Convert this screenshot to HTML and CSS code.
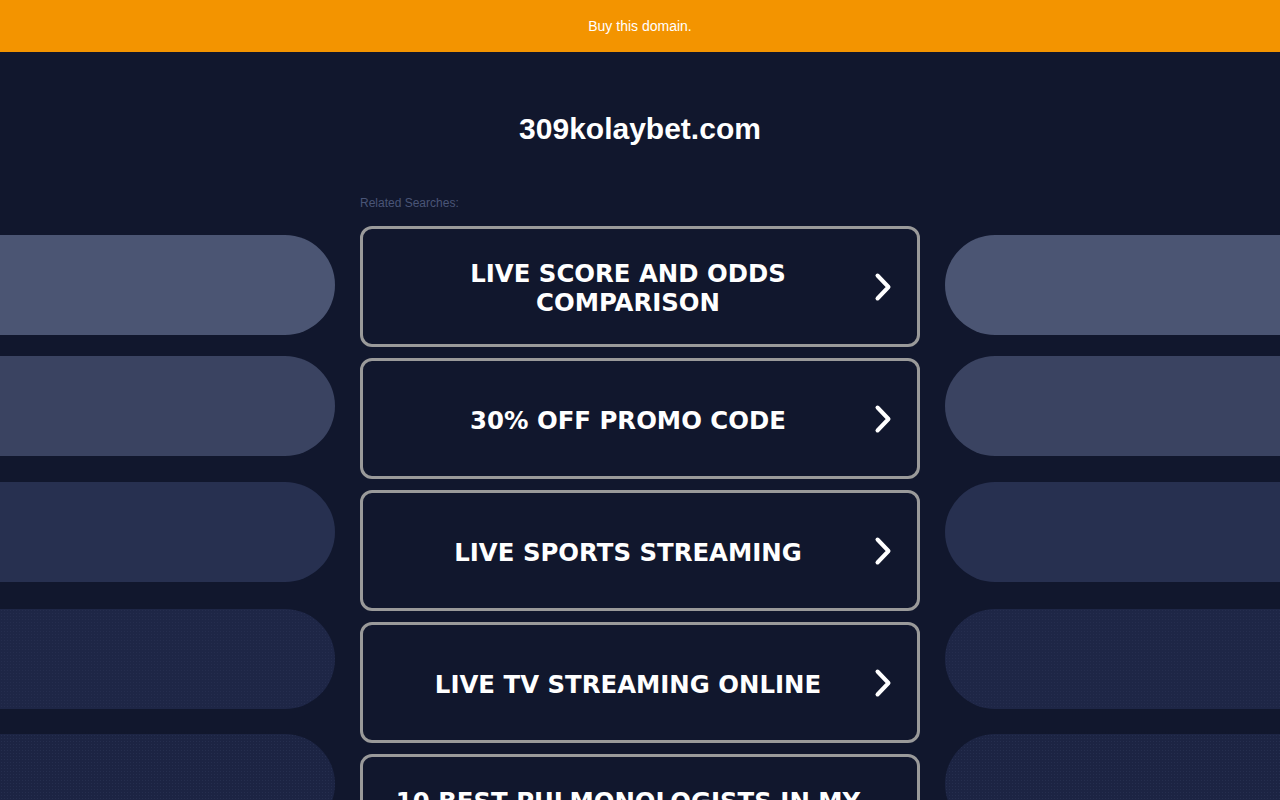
FILE: index.html
```html
<!DOCTYPE html>
<html lang="en">
<head>
<meta charset="utf-8">
<title>309kolaybet.com</title>
<link rel="stylesheet" href="styles.css">
</head>
<body>
<div class="topbar"><a class="buy" href="#">Buy this domain.</a></div>
<main class="layout">
  <aside class="side side-left">
    <div class="pill p1"></div>
    <div class="pill p2"></div>
    <div class="pill p3"></div>
    <div class="pill p4"></div>
    <div class="pill p5"></div>
  </aside>
  <section class="center">
    <h1 class="domain">309kolaybet.com</h1>
    <div class="related">Related Searches:</div>
    <ul class="links">
      <li class="link"><span class="link-text">LIVE SCORE AND ODDS COMPARISON</span><svg class="chev" width="20" height="30" viewBox="0 0 20 30"><polyline points="4.5,3.5 15.5,15 4.5,26.5" /></svg></li>
      <li class="link"><span class="link-text">30% OFF PROMO CODE</span><svg class="chev" width="20" height="30" viewBox="0 0 20 30"><polyline points="4.5,3.5 15.5,15 4.5,26.5" /></svg></li>
      <li class="link"><span class="link-text">LIVE SPORTS STREAMING</span><svg class="chev" width="20" height="30" viewBox="0 0 20 30"><polyline points="4.5,3.5 15.5,15 4.5,26.5" /></svg></li>
      <li class="link"><span class="link-text">LIVE TV STREAMING ONLINE</span><svg class="chev" width="20" height="30" viewBox="0 0 20 30"><polyline points="4.5,3.5 15.5,15 4.5,26.5" /></svg></li>
      <li class="link"><span class="link-text">10 BEST PULMONOLOGISTS IN MY AREA</span><svg class="chev" width="20" height="30" viewBox="0 0 20 30"><polyline points="4.5,3.5 15.5,15 4.5,26.5" /></svg></li>
    </ul>
  </section>
  <aside class="side side-right">
    <div class="pill p1"></div>
    <div class="pill p2"></div>
    <div class="pill p3"></div>
    <div class="pill p4"></div>
    <div class="pill p5"></div>
  </aside>
</main>
</body>
</html>
```
FILE: styles.css
```css
html, body {
  margin: 0;
  padding: 0;
}
body {
  background: #11172d;
  font-family: "Liberation Sans", Arial, sans-serif;
  color: #fff;
  overflow: hidden;
}
.topbar {
  height: 52px;
  background: #f39400;
  display: flex;
  align-items: center;
  justify-content: center;
}
.buy {
  color: #fff;
  font-size: 14px;
  text-decoration: none;
  line-height: 16px;
}
.layout {
  display: grid;
  grid-template-columns: 335px 560px 335px;
  column-gap: 25px;
}
.side {
  display: flex;
  flex-direction: column;
  padding-top: 183px;
}
.pill {
  height: 100px;
  flex: none;
}
.side-left .pill {
  border-radius: 0 50px 50px 0;
}
.side-right .pill {
  border-radius: 50px 0 0 50px;
}
.p1 { background: #4b5573; }
.p2 { background: #3a4361; margin-top: 21px; }
.p3 { background: #273050; margin-top: 26px; }
.p4 {
  background-color: #1e2646;
  background-image: radial-gradient(rgba(90, 100, 140, 0.12) 0.6px, transparent 0.8px);
  background-size: 3px 3px;
  margin-top: 27px;
}
.p5 {
  background-color: #1c2443;
  background-image: radial-gradient(rgba(90, 100, 140, 0.16) 0.6px, transparent 0.8px);
  background-size: 3px 3px;
  margin-top: 25px;
}
.center {
  display: flex;
  flex-direction: column;
  padding-top: 59px;
}
.domain {
  margin: 0;
  font-size: 30px;
  line-height: 36px;
  font-weight: bold;
  text-align: center;
  color: #fff;
}
.related {
  margin-top: 48px;
  font-size: 12px;
  line-height: 16px;
  color: #4a5577;
}
.links {
  list-style: none;
  margin: 15px 0 0;
  padding: 0;
  display: flex;
  flex-direction: column;
  gap: 11px;
}
.link {
  box-sizing: border-box;
  height: 121px;
  border: 3px solid #9a9a9a;
  border-radius: 12px;
  background: #11172d;
  display: flex;
  align-items: center;
  padding: 0 24px 0 20px;
}
.link-text {
  flex: 1;
  text-align: center;
  font-family: "DejaVu Sans", Verdana, sans-serif;
  font-weight: bold;
  font-size: 24.4px;
  line-height: 29px;
  padding-top: 3px;
  color: #fff;
}
.chev {
  flex: none;
  display: block;
}
.chev polyline {
  fill: none;
  stroke: #fff;
  stroke-width: 4;
  stroke-linecap: round;
  stroke-linejoin: round;
}
```
